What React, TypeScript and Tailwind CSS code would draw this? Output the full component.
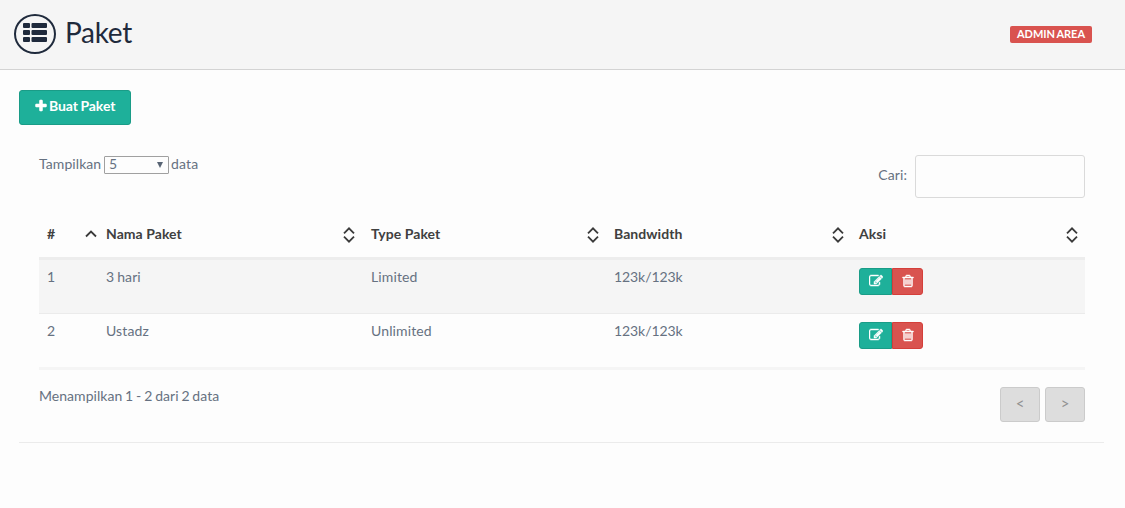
import React from "react";

type IconProps = { size: number; d: string; className?: string; weight?: number };

function Icon({ size, d, className, weight = 0 }: IconProps) {
  return (
    <svg width={size} height={size} viewBox="0 0 1792 1792" fill="currentColor" stroke="currentColor" strokeWidth={weight} className={className}>
      <path d={d} />
    </svg>
  );
}

const PLUS =
  "M1600 736v192q0 40-28 68t-68 28h-416v416q0 40-28 68t-68 28h-192q-40 0-68-28t-28-68v-416h-416q-40 0-68-28t-28-68v-192q0-40 28-68t68-28h416v-416q0-40 28-68t68-28h192q40 0 68 28t28 68v416h416q40 0 68 28t28 68z";
const EDIT =
  "M888 1184l116-116-152-152-116 116v56h96v96h56zm440-720q-16-16-33 1l-350 350q-17 17-1 33t33-1l350-350q17-17 1-33zm80 594v190q0 119-84.5 203.5t-203.5 84.5h-832q-119 0-203.5-84.5t-84.5-203.5v-832q0-119 84.5-203.5t203.5-84.5h832q63 0 117 25 15 7 18 23 3 17-9 29l-49 49q-14 14-32 8-23-6-45-6h-832q-66 0-113 47t-47 113v832q0 66 47 113t113 47h832q66 0 113-47t47-113v-126q0-13 9-22l64-64q15-15 35-7t20 29zm-96-738l288 288-672 672h-288v-288zm444 132l-92 92-288-288 92-92q28-28 68-28t68 28l152 152q28 28 28 68t-28 68z";
const TRASH =
  "M704 736v576q0 14-9 23t-23 9h-64q-14 0-23-9t-9-23v-576q0-14 9-23t23-9h64q14 0 23 9t9 23zm256 0v576q0 14-9 23t-23 9h-64q-14 0-23-9t-9-23v-576q0-14 9-23t23-9h64q14 0 23 9t9 23zm256 0v576q0 14-9 23t-23 9h-64q-14 0-23-9t-9-23v-576q0-14 9-23t23-9h64q14 0 23 9t9 23zm128 724v-948h-896v948q0 22 7 40.5t14.5 27 10.5 8.5h832q3 0 10.5-8.5t14.5-27 7-40.5zm-672-1076h448l-48-117q-7-9-17-11h-317q-10 2-17 11zm928 32v64q0 14-9 23t-23 9h-96v948q0 83-47 143.5t-113 60.5h-832q-66 0-113-58.5t-47-141.5v-952h-96q-14 0-23-9t-9-23v-64q0-14 9-23t23-9h309l70-167q15-37 54-63t79-26h320q40 0 79 26t54 63l70 167h309q14 0 23 9t9 23z";

function ListIcon() {
  return (
    <svg width="24" height="19" viewBox="0 0 24 19" fill="currentColor">
      {[0, 7, 14].map((y) => (
        <g key={y}>
          <rect x="0" y={y} width="7" height="5" rx="1" />
          <rect x="8.5" y={y} width="15.5" height="5" rx="1" />
        </g>
      ))}
    </svg>
  );
}

function SortIcon({ ascending }: { ascending?: boolean }) {
  return (
    <svg width="12" height="16" viewBox="0 0 12 16" fill="none" stroke="#3a3a3a" strokeWidth="1.8">
      {ascending ? (
        <path d="M1 9.5 6 4.5l5 5" />
      ) : (
        <>
          <path d="M1 6.3 6 1.3l5 5" />
          <path d="M1 9.7l5 5 5-5" />
        </>
      )}
    </svg>
  );
}

const COLUMNS = [
  { name: "#", pad: "pr-px" },
  { name: "Nama Paket", pad: "pr-2" },
  { name: "Type Paket", pad: "pr-[7px]" },
  { name: "Bandwidth", pad: "pr-[7px]" },
  { name: "Aksi", pad: "pr-[7px]" },
];
const ROWS = [
  ["1", "3 hari", "Limited", "123k/123k"],
  ["2", "Ustadz", "Unlimited", "123k/123k"],
];
const GRID = "grid grid-cols-[59px_265px_243px_245px_234px]";

export default function App() {
  return (
    <div className="min-h-[508px] w-full bg-[#fdfdfd] font-[Lato,sans-serif] text-[14px] leading-5 text-[#667181]">
      <header className="flex h-[70px] items-start justify-between border-b border-[#d3d3d3] bg-[#f5f5f5] pl-[14px] pr-[33px] text-[#1f2a3c]">
        <div className="flex pt-[14px]">
          <div className="flex h-10 w-[42px] items-start justify-center rounded-[50%] border-2 border-[#1f2a3c] pt-[7px]">
            <ListIcon />
          </div>
          <h1 className="ml-[9px] text-[28px] leading-9 tracking-[-0.3px]">Paket</h1>
        </div>
        <span className="mt-[26px] flex h-[17px] w-[82px] items-center justify-center rounded-[2px] bg-[#d9534f] pb-px text-[11px] font-bold whitespace-nowrap text-white [word-spacing:-1px]">
          ADMIN AREA
        </span>
      </header>

      <main className="mx-[19px] mr-[21px] h-[373px] border-b border-[#ebebeb] pt-5">
        <button className="flex h-[35px] w-[112px] items-start rounded-[3px] border border-[#1a9c87] bg-[#1eb09a] pt-[5px] pl-[14px] font-bold text-white">
          <Icon size={14} d={PLUS} weight={70} className="mt-[3px] mr-px" />
          <span className="whitespace-nowrap tracking-[-0.1px] [word-spacing:-0.6px]">Buat Paket</span>
        </button>

        <section className="mx-5 mr-[19px] pt-[30px]">
          <div className="flex h-[59px] items-start justify-between">
            <div className="flex whitespace-nowrap">
              <span className="-mt-px w-[62px] tracking-[0.08px]">Tampilkan</span>
              <button className="mx-[3px] mt-px flex h-[18px] w-[65px] items-center justify-between rounded-[1px] border border-[#a0a0a0] pr-[5px] pl-1">
                <span className="-mt-[3px]">5</span>
                <svg width="6" height="6" viewBox="0 0 6 6" fill="#586474">
                  <path d="M0 0h6L3 6z" />
                </svg>
              </button>
              <span className="-mt-px -ml-px tracking-[0.2px]">data</span>
            </div>
            <label className="flex">
              <span className="mt-[10px] mr-2 tracking-[0.1px]">Cari:</span>
              <input className="h-[43px] w-[170px] rounded-[3px] border border-[#dadada] bg-[#fdfdfd]" />
            </label>
          </div>

          <div className={`${GRID} h-[46px] border-b-[3px] border-[#ededed] pt-[10px] font-bold tracking-[0.06px] text-[#404040]`}>
            {COLUMNS.map(({ name, pad }, i) => (
              <div key={name} className={`flex items-start justify-between pl-2 ${pad}`}>
                <span>{name}</span>
                <span className="mt-[3px]">
                  <SortIcon ascending={i === 0} />
                </span>
              </div>
            ))}
          </div>
          {ROWS.map((row, i) => (
            <div key={row[0]} className={`${GRID} pt-[7px] ${i === 0 ? "h-[54px] border-b border-[#ebebeb] bg-[#f5f5f5]" : "h-14 border-b-[3px] border-[#f5f5f5]"}`}>
              {row.map((cell, c) => (
                <div key={c} className={c === 3 ? "pl-2 tracking-[-0.08px]" : "pl-2 tracking-[0.12px] [word-spacing:-0.8px]"}>
                  {cell}
                </div>
              ))}
              <div className="flex items-start pt-px pl-2 text-white">
                <button className="flex h-[27px] w-[33px] justify-center rounded-l-[3px] border border-[#1a9c87] bg-[#1eb09a] pt-[5px]">
                  <Icon size={14} d={EDIT} weight={60} />
                </button>
                <button className="flex h-[27px] w-[31px] justify-center rounded-r-[3px] border border-[#d43f3a] bg-[#d9534f] pt-[5px]">
                  <Icon size={14} d={TRASH} weight={60} />
                </button>
              </div>
            </div>
          ))}

          <footer className="flex items-start justify-between pt-4">
            <span className="tracking-[0.04px] [word-spacing:-0.8px]">Menampilkan 1 - 2 dari 2 data</span>
            <div className="mt-px flex gap-[5px] text-[15px] text-[#919191]">
              <button className="h-[35px] w-10 rounded-[3px] border border-[#cbcbcb] bg-[#dddddd] pb-1">&lt;</button>
              <button className="h-[35px] w-10 rounded-[3px] border border-[#cbcbcb] bg-[#dddddd] pb-1">&gt;</button>
            </div>
          </footer>
        </section>
      </main>
    </div>
  );
}
